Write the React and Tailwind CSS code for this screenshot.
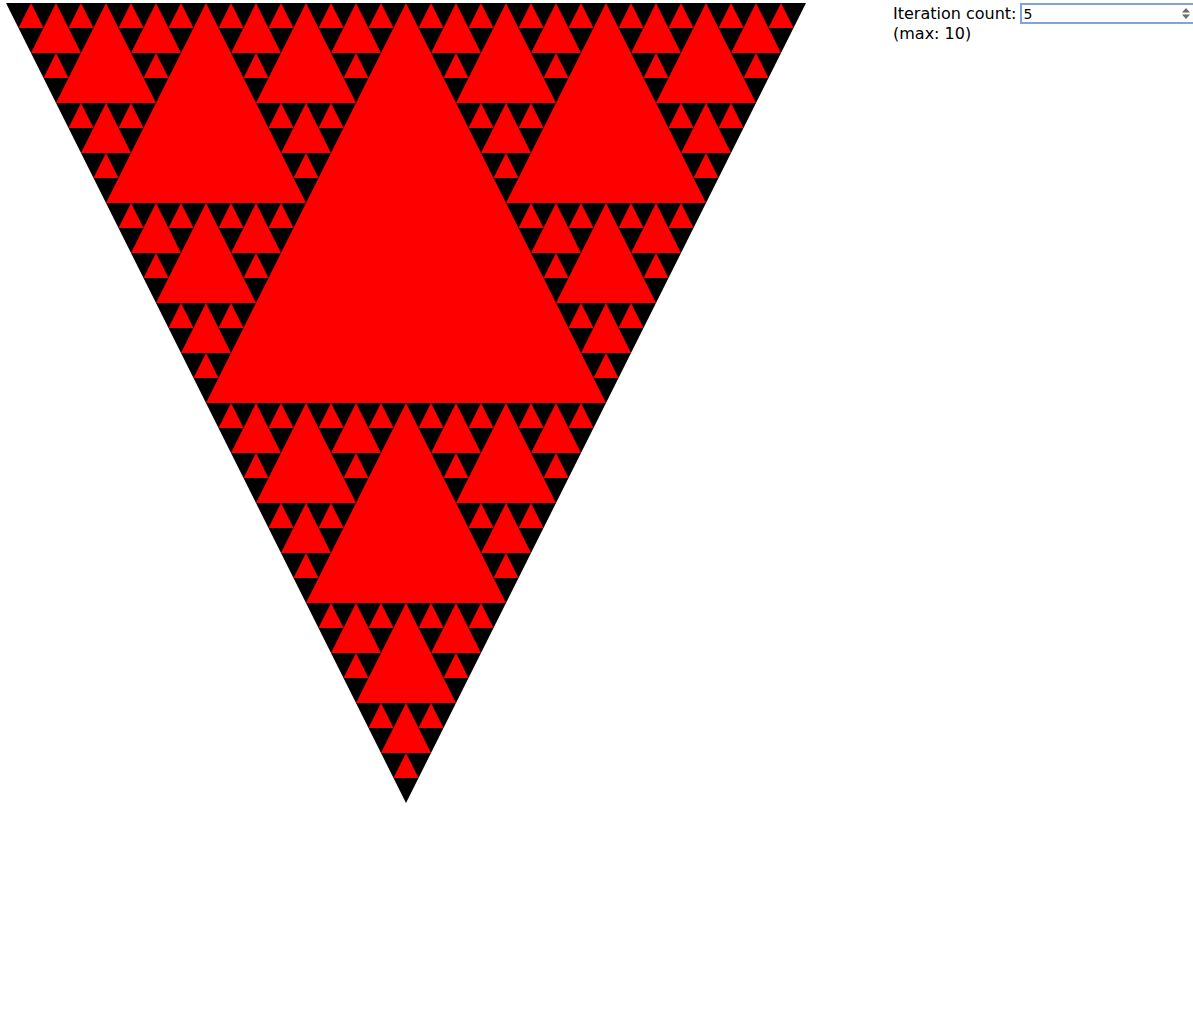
import { useState } from "react";

// collect the upright (red) triangles of an inverted sierpinski triangle
function sierpinski(a, b, c, depth, out) {
  if (depth === 0) return out;
  const ab = [(a[0] + b[0]) / 2, (a[1] + b[1]) / 2];
  const ac = [(a[0] + c[0]) / 2, (a[1] + c[1]) / 2];
  const bc = [(b[0] + c[0]) / 2, (b[1] + c[1]) / 2];
  out.push([ab, ac, bc]);
  sierpinski(a, ab, ac, depth - 1, out);
  sierpinski(ab, b, bc, depth - 1, out);
  sierpinski(ac, bc, c, depth - 1, out);
  return out;
}

const pts = (tri) => tri.map((p) => p.join(",")).join(" ");

export default function App() {
  const [count, setCount] = useState(5);
  const n = Math.max(0, Math.min(10, Number(count) || 0));
  const reds = sierpinski([0, 0], [800, 0], [400, 800], n, []);

  return (
    <div className="flex overflow-hidden w-[1193px] h-[1009px] bg-white font-['DejaVu_Sans',sans-serif] text-[16px] text-black">
      <svg width="800" height="800" viewBox="0 0 800 800" className="shrink-0 ml-[6px] mt-[3px]">
        <polygon points="0,0 800,0 400,800" fill="#000000" />
        {reds.map((t, i) => (
          <polygon key={i} points={pts(t)} fill="#ff0000" />
        ))}
      </svg>
      <div className="w-[300px] shrink-0 ml-[87px]">
        <div className="flex items-center h-[21px] mt-[3px]">
          <span className="leading-[20px] whitespace-nowrap">Iteration count:</span>
          <div className="relative ml-[4px] shrink-0">
            <input
              type="text"
              inputMode="numeric"
              value={count}
              onChange={(e) => setCount(e.target.value)}
              className="block w-[180px] h-[21px] border-2 border-[#7fa2e2] bg-white pl-[1px] text-[14px] leading-[17px] font-['DejaVu_Sans',sans-serif] outline-none"
            />
            <svg width="8" height="11" viewBox="0 0 8 11" className="absolute left-[162px] top-[5px]">
              <polygon points="4,0 8,4.5 0,4.5" fill="#6b6b6b" />
              <polygon points="0,6.5 8,6.5 4,11" fill="#6b6b6b" />
            </svg>
          </div>
        </div>
        <div className="leading-[20px]">(max: 10)</div>
      </div>
    </div>
  );
}
